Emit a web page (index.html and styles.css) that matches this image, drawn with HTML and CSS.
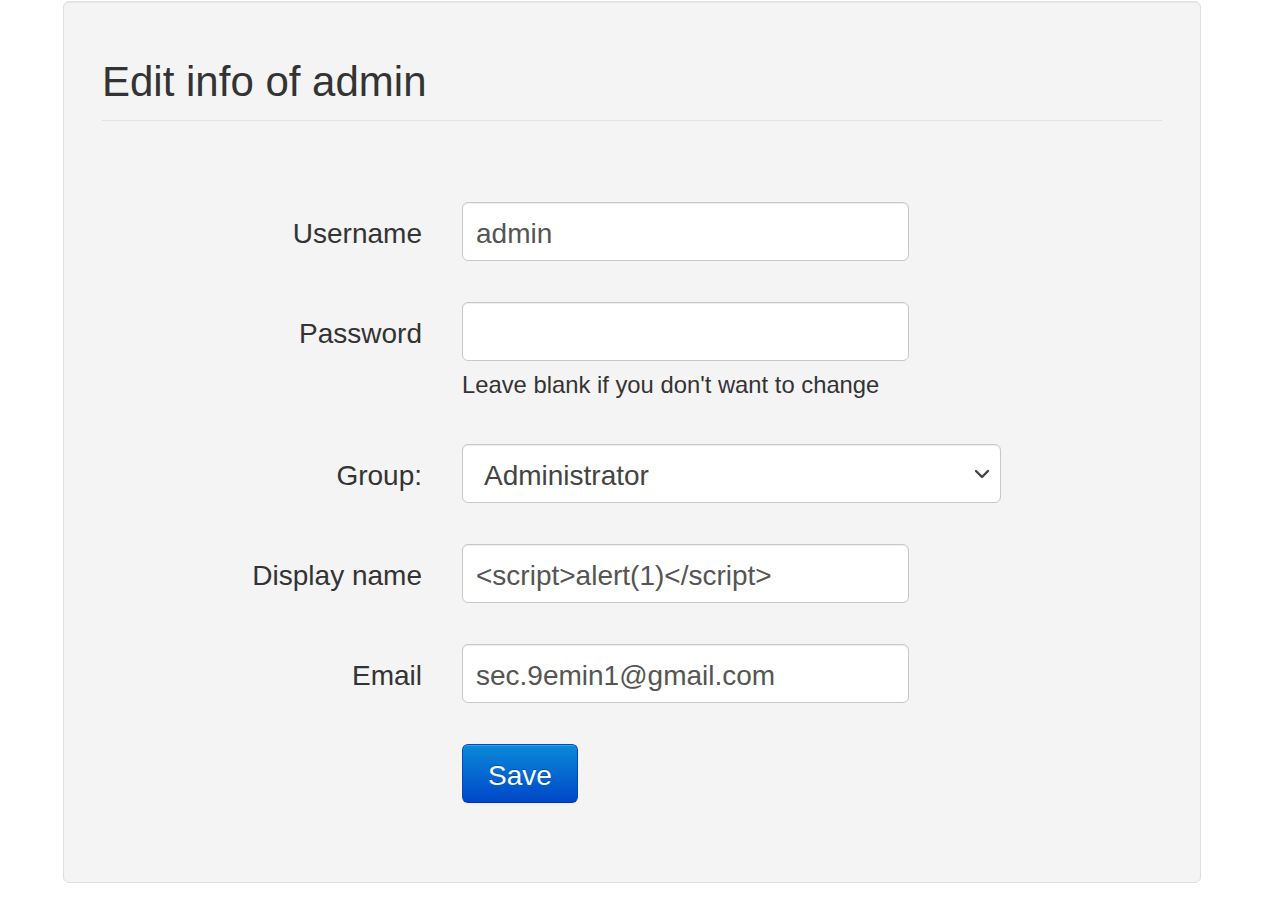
FILE: index.html
```html
<!DOCTYPE html>
<html lang="en">
<head>
<meta charset="utf-8">
<title>Edit info of admin</title>
<link rel="stylesheet" href="styles.css">
</head>
<body>
<div class="well">
  <h2 class="title">Edit info of admin</h2>
  <form class="form">
    <div class="field">
      <label class="label" for="username">Username</label>
      <div class="controls">
        <input class="input" id="username" type="text" value="admin">
      </div>
    </div>
    <div class="field">
      <label class="label" for="password">Password</label>
      <div class="controls">
        <input class="input" id="password" type="password" value="">
        <p class="help">Leave blank if you don't want to change</p>
      </div>
    </div>
    <div class="field">
      <label class="label" for="group">Group:</label>
      <div class="controls">
        <div class="select-wrap">
          <select class="select" id="group">
            <option>Administrator</option>
          </select>
          <svg class="chevron" width="16" height="10" viewBox="0 0 16 10" aria-hidden="true"><path d="M2 2 L8 8 L14 2" fill="none" stroke="#444" stroke-width="2.4" stroke-linecap="round" stroke-linejoin="round"/></svg>
        </div>
      </div>
    </div>
    <div class="field">
      <label class="label" for="display">Display name</label>
      <div class="controls">
        <input class="input" id="display" type="text" value="&lt;script&gt;alert(1)&lt;/script&gt;">
      </div>
    </div>
    <div class="field">
      <label class="label" for="email">Email</label>
      <div class="controls">
        <input class="input" id="email" type="text" value="sec.9emin1@gmail.com">
      </div>
    </div>
    <div class="field">
      <span class="label"></span>
      <div class="controls">
        <button class="btn-primary" type="button">Save</button>
      </div>
    </div>
  </form>
</div>
</body>
</html>
```
FILE: styles.css
```css
html, body {
  margin: 0;
  padding: 0;
  background: #fff;
}

body {
  font-family: "Liberation Sans", Arial, Helvetica, sans-serif;
  color: #333;
}

.well {
  box-sizing: border-box;
  width: 1138px;
  height: 882px;
  margin: 1px 0 0 63px;
  padding: 0 38px;
  background: #f4f4f4;
  border: 1px solid #e0e0e0;
  border-radius: 6px;
  box-shadow: inset 0 1px 1px rgba(0, 0, 0, 0.05);
}

.title {
  margin: 55px 0 0;
  padding: 0 0 13px;
  font-size: 42px;
  line-height: 50px;
  font-weight: normal;
  color: #333;
  border-bottom: 1px solid #e3e3e3;
}

.form {
  padding-top: 81px;
}

.field {
  display: grid;
  grid-template-columns: 320px auto;
  column-gap: 40px;
  margin-bottom: 41px;
}

.label {
  box-sizing: border-box;
  height: 59px;
  padding-top: 2px;
  font-size: 28px;
  line-height: 59px;
  text-align: right;
  color: #333;
}

.controls {
  display: flex;
  flex-direction: column;
  align-items: flex-start;
}

.input,
.select {
  box-sizing: border-box;
  height: 59px;
  font-family: "Liberation Sans", Arial, Helvetica, sans-serif;
  font-size: 28px;
  color: #555;
  background: #fff;
  border: 1px solid #c8c8c8;
  border-radius: 6px;
  box-shadow: inset 0 1px 1px rgba(0, 0, 0, 0.075);
  margin: 0;
}

.input {
  width: 447px;
  padding: 4px 13px 0;
}

.help {
  margin: 10px 0 4px;
  font-size: 23.8px;
  line-height: 28px;
  color: #333;
}

.select-wrap {
  position: relative;
  width: 539px;
}

.select {
  width: 539px;
  padding: 4px 40px 0 21px;
  -webkit-appearance: none;
  appearance: none;
  color: #444;
}

.chevron {
  position: absolute;
  right: 11px;
  top: 25px;
  pointer-events: none;
}

.btn-primary {
  box-sizing: border-box;
  height: 59px;
  padding: 4px 25px 0;
  font-family: "Liberation Sans", Arial, Helvetica, sans-serif;
  font-size: 28px;
  color: #fff;
  text-shadow: 0 -1px 0 rgba(0, 0, 0, 0.25);
  background: linear-gradient(to bottom, #0a8ad8, #0047c8);
  border: 1px solid #0049c4;
  border-bottom-color: #003a9e;
  border-radius: 6px;
  box-shadow: inset 0 1px 0 rgba(255, 255, 255, 0.2), 0 1px 2px rgba(0, 0, 0, 0.05);
  cursor: pointer;
}
```
